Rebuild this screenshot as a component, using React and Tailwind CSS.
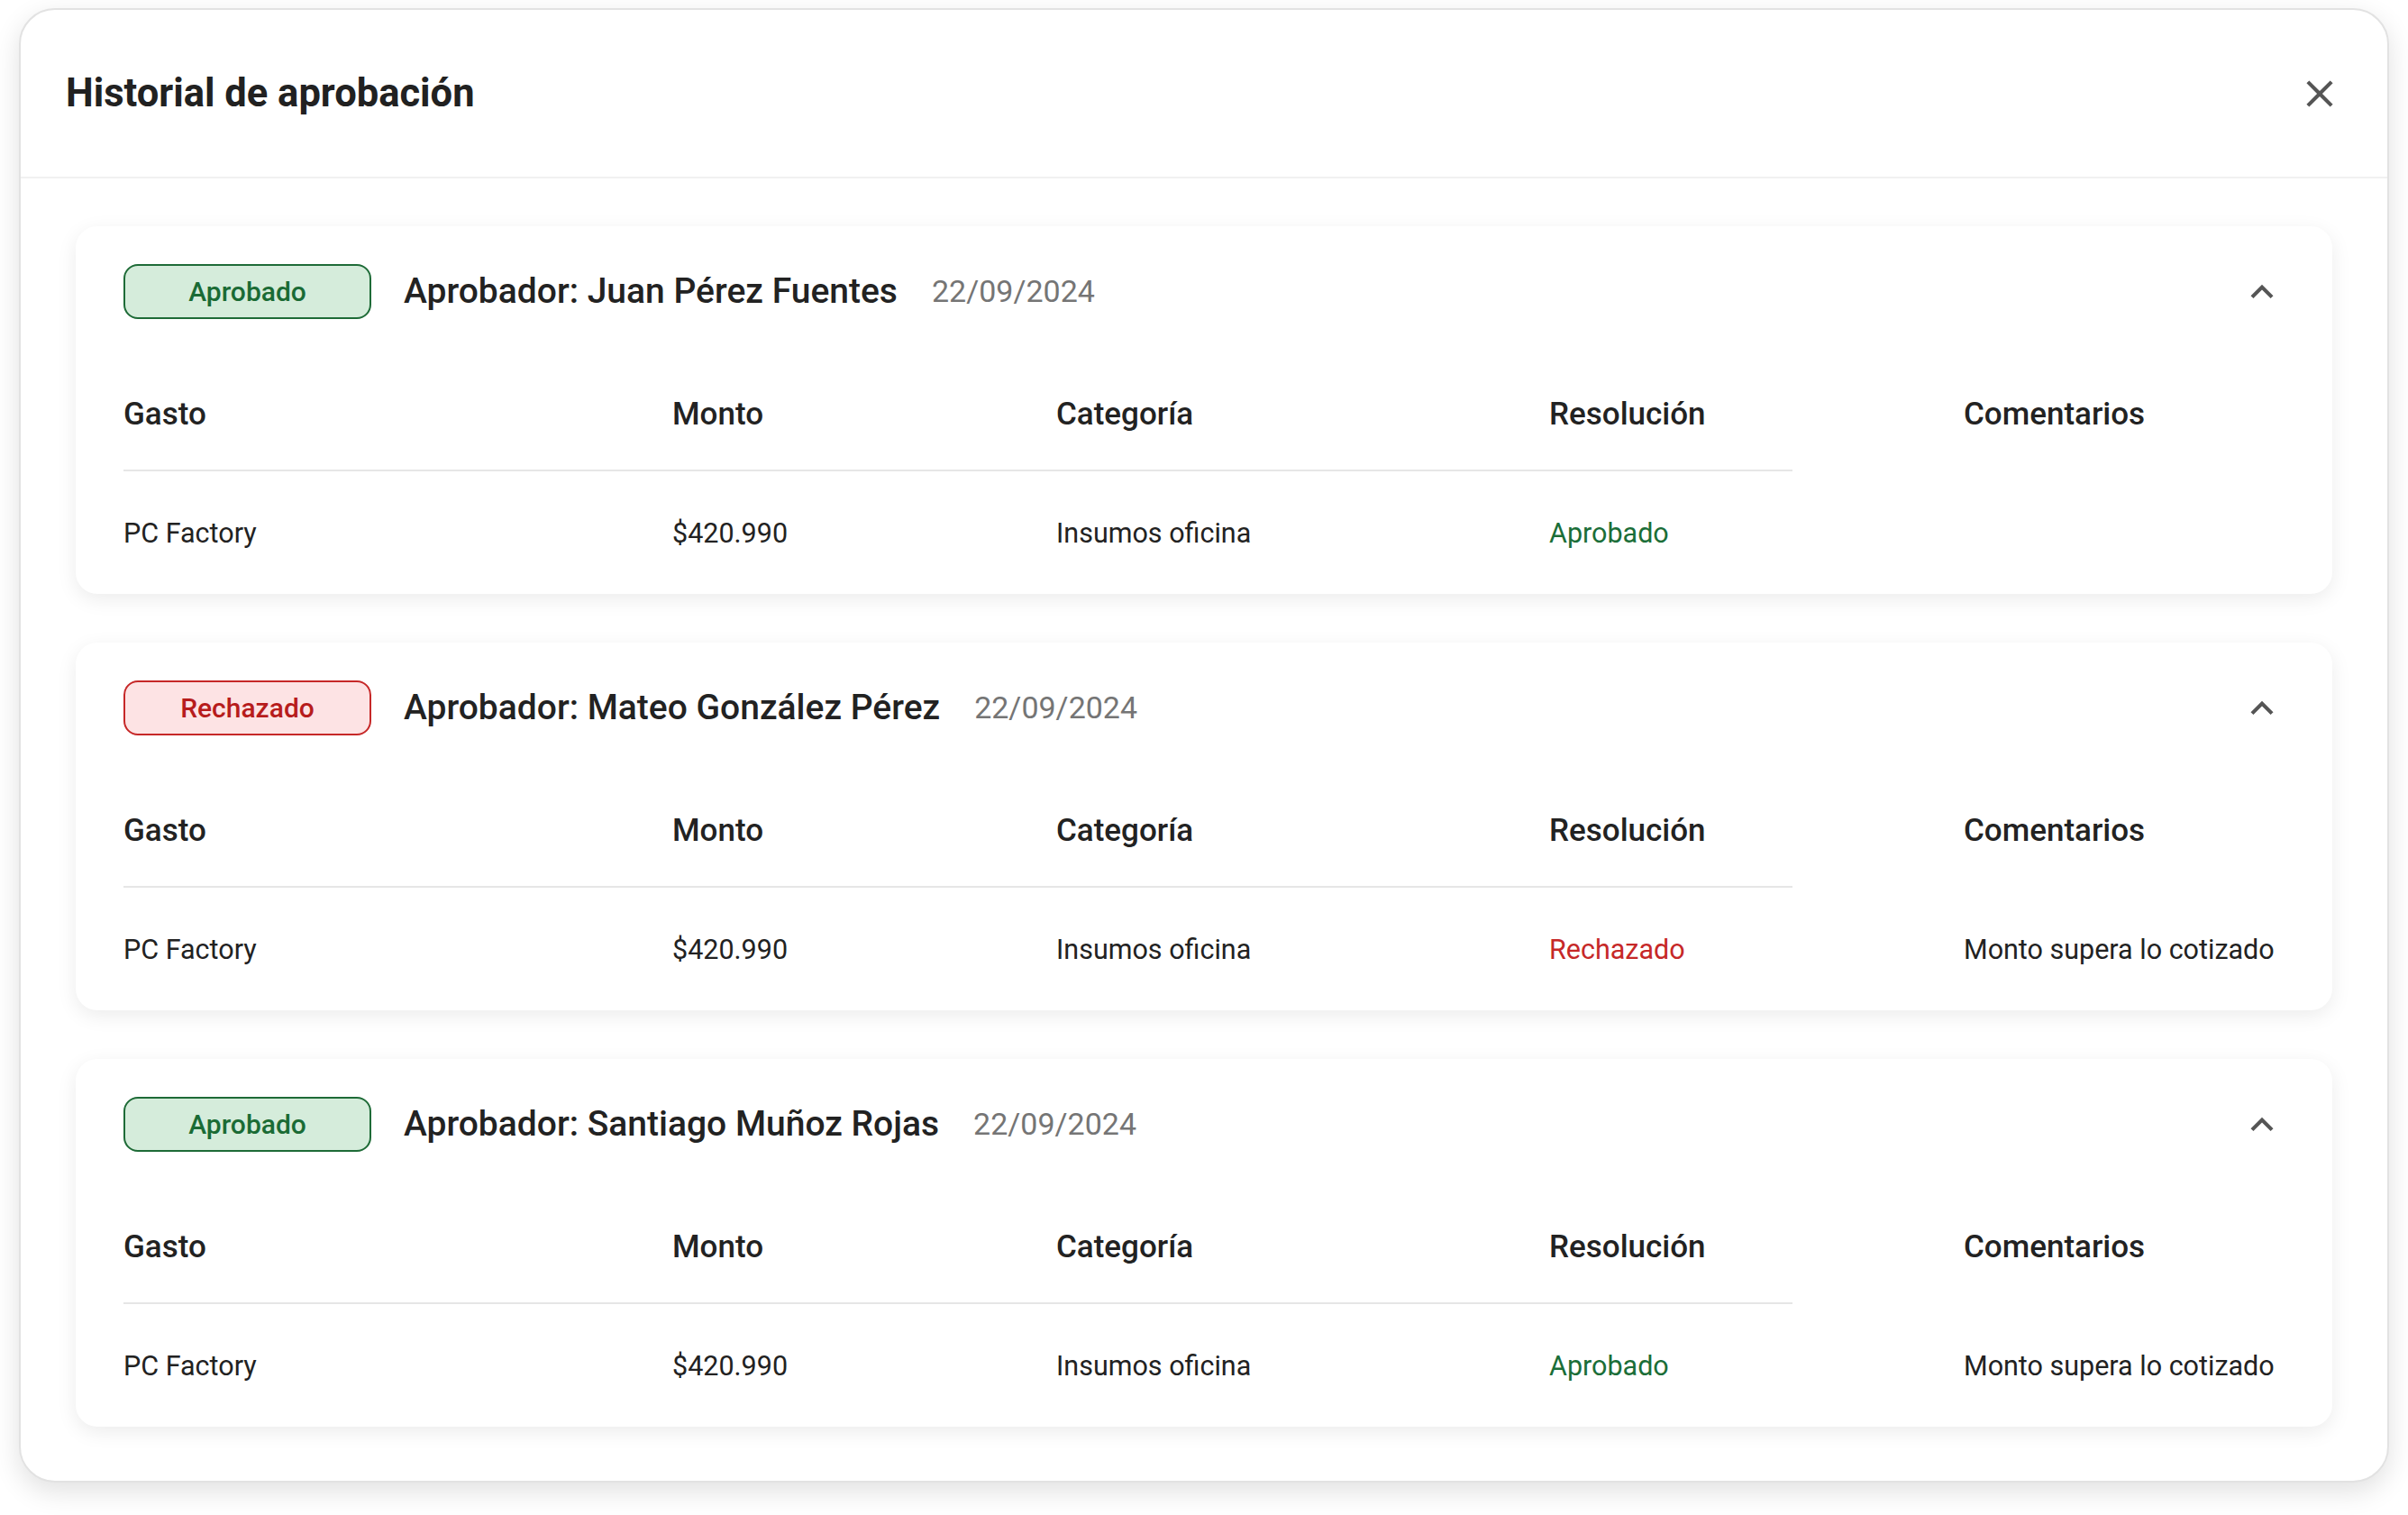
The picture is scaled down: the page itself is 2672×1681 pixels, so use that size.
import React from 'react';

const entries = [
  {
    status: 'Aprobado',
    approver: 'Juan Pérez Fuentes',
    date: '22/09/2024',
    gasto: 'PC Factory',
    monto: '$420.990',
    categoria: 'Insumos oficina',
    comentario: '',
  },
  {
    status: 'Rechazado',
    approver: 'Mateo González Pérez',
    date: '22/09/2024',
    gasto: 'PC Factory',
    monto: '$420.990',
    categoria: 'Insumos oficina',
    comentario: 'Monto supera lo cotizado',
  },
  {
    status: 'Aprobado',
    approver: 'Santiago Muñoz Rojas',
    date: '22/09/2024',
    gasto: 'PC Factory',
    monto: '$420.990',
    categoria: 'Insumos oficina',
    comentario: 'Monto supera lo cotizado',
  },
];

function CloseIcon() {
  return (
    <svg viewBox="0 0 24 24" className="h-[50px] w-[50px] fill-[#555555]">
      <path d="M19 6.41L17.59 5 12 10.59 6.41 5 5 6.41 10.59 12 5 17.59 6.41 19 12 13.41 17.59 19 19 17.59 13.41 12z" />
    </svg>
  );
}

function ExpandLessIcon() {
  return (
    <svg viewBox="0 0 24 24" className="h-[50px] w-[50px] fill-[#555555]">
      <path d="M12 8l-6 6 1.41 1.41L12 10.83l4.59 4.58L18 14z" />
    </svg>
  );
}

function StatusBadge({ status }) {
  const approved = status === 'Aprobado';
  return (
    <span
      className={`flex h-[61px] w-[275px] shrink-0 items-center justify-center rounded-[16px] border-[2.5px] text-[30px] font-medium ${
        approved
          ? 'border-[#1e6b37] bg-[#d5ecdb] text-[#1a6b35]'
          : 'border-[#c62828] bg-[#fde3e4] text-[#b71c1c]'
      }`}
    >
      {status}
    </span>
  );
}

function HistoryCard({ entry }) {
  const approved = entry.status === 'Aprobado';
  const headers = ['Gasto', 'Monto', 'Categoría', 'Resolución', 'Comentarios'];
  return (
    <div className="h-[408px] rounded-[24px] bg-white px-[53px] pt-[42px] shadow-[0_6px_22px_rgba(0,0,0,0.08)]">
      <div className="flex h-[61px] items-center">
        <StatusBadge status={entry.status} />
        <span className="ml-[36px] text-[39px] font-medium text-[#222222]">
          Aprobador: {entry.approver}
        </span>
        <span className="ml-[38px] text-[34px] text-[#757575]">{entry.date}</span>
        <button className="ml-auto flex items-center justify-center">
          <ExpandLessIcon />
        </button>
      </div>

      <div className="mt-[46px]">
        <div className="grid h-[121px] grid-cols-[609px_426px_547px_460px_1fr] items-center">
          {headers.map((h) => (
            <div key={h} className="text-[35px] font-medium text-[#222222]">
              {h}
            </div>
          ))}
        </div>
        <div className="h-[2px] w-[1852px] bg-[#e6e6e6]" />
        <div className="grid h-[134px] grid-cols-[609px_426px_547px_460px_1fr] items-center pt-[4px] text-[30.5px] text-[#222222]">
          <div>{entry.gasto}</div>
          <div>{entry.monto}</div>
          <div>{entry.categoria}</div>
          <div className={approved ? 'text-[#1b6e38]' : 'text-[#c62828]'}>{entry.status}</div>
          <div className="whitespace-nowrap">{entry.comentario}</div>
        </div>
      </div>
    </div>
  );
}

export default function App() {
  return (
    <div className="min-h-screen bg-white px-[21px] pt-[9px] font-['Roboto',sans-serif]">
      <div className="rounded-[40px] border-2 border-[#e2e2e2] bg-white shadow-[0_10px_30px_rgba(0,0,0,0.12)]">
        {/* Header */}
        <div className="flex h-[187px] items-center justify-between border-b-2 border-[#f1f1f1] px-[50px]">
          <h1 className="text-[43.5px] font-bold text-[#212121]">Historial de aprobación</h1>
          <button className="flex items-center justify-center">
            <CloseIcon />
          </button>
        </div>

        {/* Body */}
        <div className="flex flex-col gap-[54px] px-[61px] pb-[60px] pt-[53px]">
          {entries.map((entry, i) => (
            <HistoryCard key={i} entry={entry} />
          ))}
        </div>
      </div>
    </div>
  );
}
